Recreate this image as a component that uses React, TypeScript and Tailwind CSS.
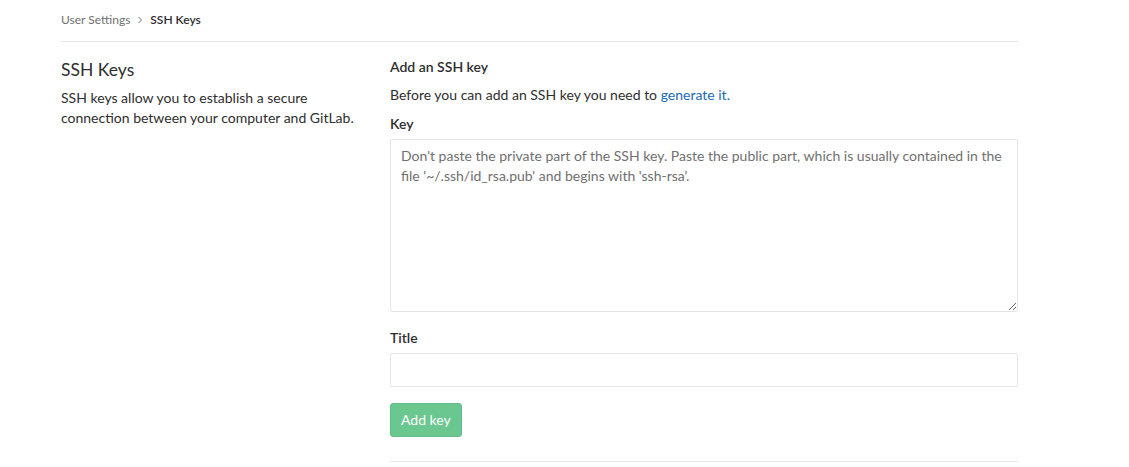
import React from "react";

const font = { fontFamily: 'Lato, "Noto Sans", "Liberation Sans", sans-serif' };

export default function App() {
    return (
        <div className="min-h-screen w-full bg-white text-[#2e2e2e] text-[14px] leading-[20px]" style={font}>
            <div className="ml-[61px] w-[957px]">
                {/* Breadcrumb */}
                <div className="h-[42px] flex items-center border-b border-[#e5e5e5] text-[12px] pb-[2px]">
                    <span className="text-[#707070]">User Settings</span>
                    <svg className="mx-[6px] text-[#707070]" width="8" height="10" viewBox="0 0 8 10" fill="none">
                        <path d="M2.5 2 L5.5 5 L2.5 8" stroke="currentColor" strokeWidth="1" />
                    </svg>
                    <span className="font-semibold text-[#2e2e2e]">SSH Keys</span>
                </div>

                <div className="flex pt-[15px]">
                    {/* Left column */}
                    <div className="w-[299px] mr-[30px] shrink-0">
                        <h4 className="text-[17.5px] leading-[24px] mt-[1px] mb-[6px]">SSH Keys</h4>
                        <p>SSH keys allow you to establish a secure connection between your computer and GitLab.</p>
                    </div>

                    {/* Right column */}
                    <div className="w-[628px] pb-[24px] border-b border-[#e5e5e5]">
                        <h5 className="font-semibold">Add an SSH key</h5>
                        <p className="mt-[8px]">
                            Before you can add an SSH key you need to{" "}
                            <a href="#" className="text-[#1b69b6]">generate it.</a>
                        </p>
                        <label className="block font-semibold mt-[9px]">Key</label>
                        <textarea
                            className="block mt-[5px] w-full h-[173px] border border-[#e5e5e5] rounded-[2px] px-[10px] py-[6px] placeholder:text-[#707070] outline-none"
                            placeholder="Don't paste the private part of the SSH key. Paste the public part, which is usually contained in the file '~/.ssh/id_rsa.pub' and begins with 'ssh-rsa'."
                        />
                        <label className="block font-semibold mt-[16px]">Title</label>
                        <input
                            type="text"
                            className="block mt-[5px] w-full h-[34px] border border-[#e5e5e5] rounded-[2px] px-[10px] outline-none"
                        />
                        <button
                            disabled
                            className="mt-[16px] h-[34px] px-[10px] rounded-[3px] bg-[#6ac790] border border-[#5fbf86] text-white text-[14px]"
                        >
                            Add key
                        </button>
                    </div>
                </div>
            </div>
        </div>
    );
}
